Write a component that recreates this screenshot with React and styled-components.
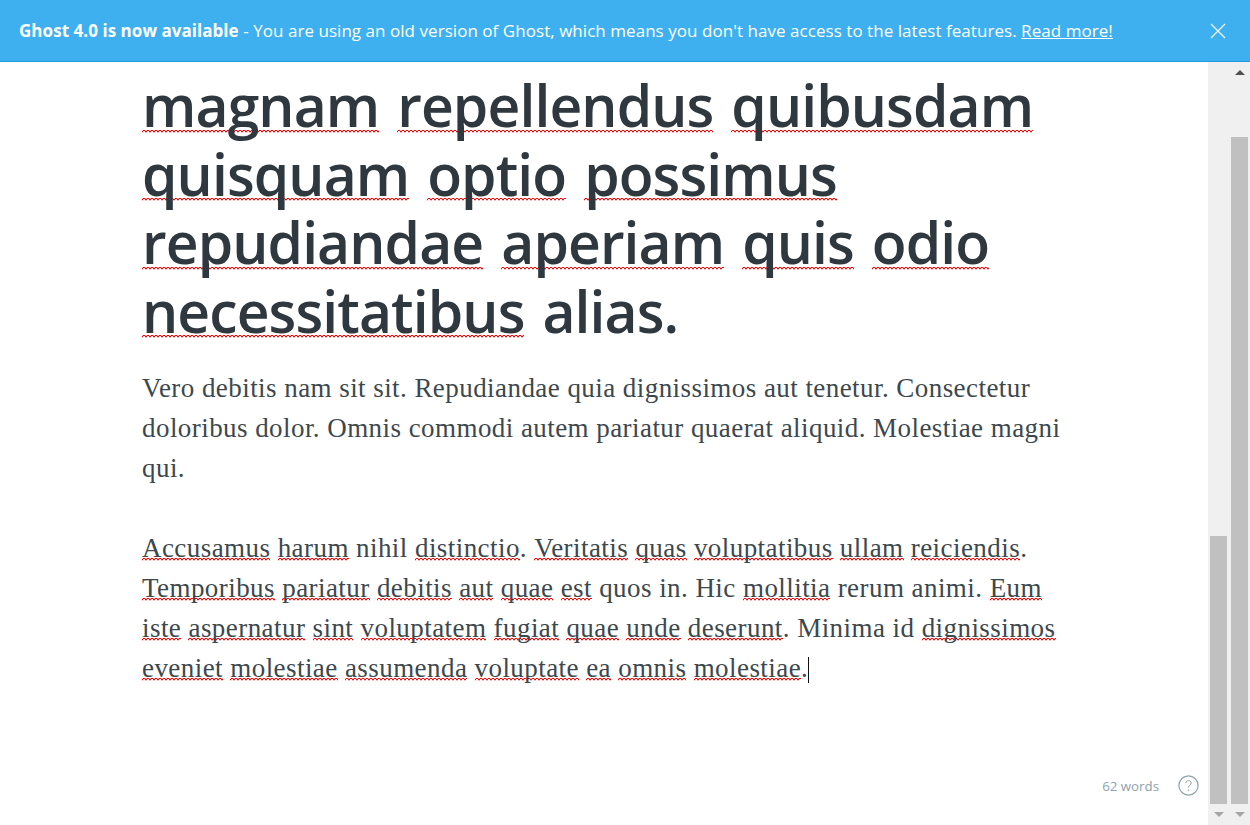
import React from 'react'
import styled, { createGlobalStyle } from 'styled-components'

const GlobalStyle = createGlobalStyle`
  html, body {
    margin: 0;
    height: 100%;
    overflow: hidden;
    background: #fff;
  }
  #root { height: 100%; }
`;

const Page = styled.div`
  display: flex;
  flex-direction: column;
  height: 825px;
  font-family: "Open Sans", "Noto Sans", sans-serif;
`;

const Banner = styled.div`
  display: flex;
  align-items: center;
  justify-content: space-between;
  box-sizing: border-box;
  height: 62px;
  flex: none;
  padding: 0 24px 0 19px;
  background: #3eb0ef;
  border-bottom: 1px solid #1f9ce0;
  color: #fff;
  font-size: 17px;
  letter-spacing: 0.045px;
`;

const BannerText = styled.div`
  white-space: nowrap;
  b { font-weight: 700; }
  a { color: #fff; text-decoration: underline; }
`;

const CloseIcon = styled.svg`
  width: 16px;
  height: 16px;
  display: block;
`;

const Body = styled.div`
  display: flex;
  flex: 1;
  min-height: 0;
`;

const Editor = styled.div`
  position: relative;
  flex: 1;
  overflow: hidden;
  padding: 9px 0 0 142px;
`;

const Title = styled.h1`
  margin: 0 0 23px;
  font-size: 57px;
  line-height: 68.6px;
  font-weight: 600;
  color: #2e383e;
  letter-spacing: -0.9px;
  word-spacing: 4px;
`;

const Line = styled.div`
  white-space: nowrap;
`;

const Paragraph = styled.p`
  margin: 0 0 40px;
  font-family: "Liberation Serif", serif;
  font-size: 27px;
  letter-spacing: 0.44px;
  line-height: 40px;
  color: #3c484e;
`;

const wave = "data:image/svg+xml,%3Csvg xmlns='http://www.w3.org/2000/svg' width='4' height='3'%3E%3Cpath d='M0 2.5L1 .5h2l1 2' stroke='%23f00' fill='none'/%3E%3C/svg%3E";

const Miss = styled.span`
  display: inline-block;
  background-image: url("${wave}");
  background-repeat: repeat-x;
  background-size: 4px 3px;
  background-position: 0 calc(100% - ${(p) => p.$lift}px);
`;

const Caret = styled.span`
  display: inline-block;
  width: 1px;
  height: 26px;
  background: #111;
  vertical-align: -6px;
`;

const Footer = styled.div`
  position: absolute;
  right: 9px;
  bottom: 29px;
  display: flex;
  align-items: center;
  gap: 19px;
  color: #8fa2ad;
  font-size: 13.3px;
`;

const HelpIcon = styled.svg`
  width: 21px;
  height: 21px;
  display: block;
`;

const Track = styled.div`
  display: flex;
  flex-direction: column;
  align-items: center;
  flex: none;
  width: 21px;
  background: #f0f0f0;
`;

const ArrowBox = styled.div`
  display: flex;
  align-items: center;
  justify-content: center;
  flex: none;
  height: 21px;
`;

const Arrow = styled.div`
  width: 0;
  height: 0;
  border-left: 5px solid transparent;
  border-right: 5px solid transparent;
  ${(p) => p.$up
    ? `border-bottom: 5px solid ${p.$color};`
    : `border-top: 5px solid ${p.$color};`}
`;

const Gutter = styled.div`
  flex: 1;
  width: 17px;
  display: flex;
  flex-direction: column;
  justify-content: flex-end;
`;

const Thumb = styled.div`
  width: 100%;
  height: ${(p) => p.$height}px;
  background: #c0c0c0;
`;

const title = [
  [['magnam', 1], ['repellendus', 1], ['quibusdam', 1]],
  [['quisquam', 1], ['optio', 1], ['possimus', 1]],
  [['repudiandae', 1], ['aperiam', 1], ['quis', 1], ['odio', 1]],
  [['necessitatibus', 1], ['alias.', 0]],
];

const first = [
  'Vero debitis nam sit sit. Repudiandae quia dignissimos aut tenetur. Consectetur',
  'doloribus dolor. Omnis commodi autem pariatur quaerat aliquid. Molestiae magni',
  'qui.',
];

const second = [
  [['Accusamus', 1], ['harum', 1], ['nihil', 0], ['distinctio', 1], ['. ', 2], ['Veritatis', 1], ['quas', 1], ['voluptatibus', 1], ['ullam', 1], ['reiciendis', 1], ['.', 2]],
  [['Temporibus', 1], ['pariatur', 1], ['debitis', 1], ['aut', 1], ['quae', 1], ['est', 1], ['quos', 0], ['in.', 0], ['Hic', 0], ['mollitia', 1], ['rerum', 0], ['animi.', 0], ['Eum', 1]],
  [['iste', 1], ['aspernatur', 1], ['sint', 1], ['voluptatem', 1], ['fugiat', 1], ['quae', 1], ['unde', 1], ['deserunt', 1], ['. ', 2], ['Minima', 0], ['id', 0], ['dignissimos', 1]],
  [['eveniet', 1], ['molestiae', 1], ['assumenda', 1], ['voluptate', 1], ['ea', 1], ['omnis', 1], ['molestiae', 1], ['.', 2]],
];

// 1 = misspelled word, 2 = punctuation glued to the word before it
function Words({ words, lift }) {
  return words.map(([word, kind], i) => {
    const next = words[i + 1];
    const gap = next && next[1] !== 2 && kind !== 2 ? ' ' : '';
    return (
      <React.Fragment key={i}>
        {kind === 1 ? <Miss $lift={lift}>{word}</Miss> : word}
        {gap}
      </React.Fragment>
    );
  });
}

function Scrollbar({ thumb, up }) {
  return (
    <Track>
      <ArrowBox>{up && <Arrow $up $color="#505050" />}</ArrowBox>
      <Gutter><Thumb $height={thumb} /></Gutter>
      <ArrowBox><Arrow $color="#a6a6a6" /></ArrowBox>
    </Track>
  );
}

export default function App() {
  return (
    <Page>
      <GlobalStyle />
      <Banner>
        <BannerText>
          <b>Ghost 4.0 is now available</b> - You are using an old version of Ghost, which means you don't have access to the latest features. <a href="#">Read more!</a>
        </BannerText>
        <CloseIcon viewBox="0 0 16 16">
          <path d="M1 1l14 14M15 1L1 15" stroke="#fff" strokeWidth="1.1" fill="none" />
        </CloseIcon>
      </Banner>
      <Body>
        <Editor>
          <Title>
            {title.map((words, i) => (
              <Line key={i}><Words words={words} lift={7} /></Line>
            ))}
          </Title>
          <Paragraph>
            {first.map((text) => <Line key={text}>{text}</Line>)}
          </Paragraph>
          <Paragraph>
            {second.map((words, i) => (
              <Line key={i}>
                <Words words={words} lift={7} />
                {i === second.length - 1 && <Caret />}
              </Line>
            ))}
          </Paragraph>
          <Footer>
            <span>62 words</span>
            <HelpIcon viewBox="0 0 21 21">
              <circle cx="10.5" cy="10.5" r="9.6" stroke="#8fa2ad" strokeWidth="1.2" fill="none" />
              <path d="M7.8 8.2c0-1.6 1.2-2.6 2.7-2.6s2.7 1 2.7 2.4c0 2-2.7 2.2-2.7 4.4" stroke="#8fa2ad" strokeWidth="1" fill="none" />
              <circle cx="10.5" cy="15.2" r="0.8" fill="#8fa2ad" />
            </HelpIcon>
          </Footer>
        </Editor>
        <Scrollbar thumb={268} />
        <Scrollbar thumb={667} up />
      </Body>
    </Page>
  );
}
